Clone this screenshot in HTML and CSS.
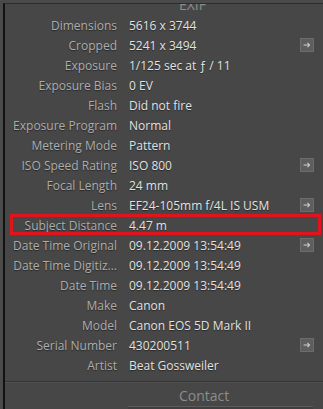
FILE: index.html
```html
<!DOCTYPE html>
<html lang="en">
<head>
  <meta charset="UTF-8" />
  <title>Metadata - EXIF</title>
  <link rel="stylesheet" href="styles.css">
</head>
<body>
  <div class="panel">
    <div class="section-head top"><span>EXIF</span></div>

    <div class="rows">
      <div class="row"><span class="label">Dimensions</span><span class="value">5616 x 3744</span></div>
      <div class="row"><span class="label">Cropped</span><span class="value">5241 x 3494</span><button class="go"><svg viewBox="0 0 14 14"><path d="M3 7h7M7.5 4.5 10 7 7.5 9.5"/></svg></button></div>
      <div class="row"><span class="label">Exposure</span><span class="value">1/125 sec at ƒ / 11</span></div>
      <div class="row"><span class="label">Exposure Bias</span><span class="value">0 EV</span></div>
      <div class="row"><span class="label">Flash</span><span class="value">Did not fire</span></div>
      <div class="row"><span class="label">Exposure Program</span><span class="value">Normal</span></div>
      <div class="row"><span class="label">Metering Mode</span><span class="value">Pattern</span></div>
      <div class="row"><span class="label">ISO Speed Rating</span><span class="value">ISO 800</span><button class="go"><svg viewBox="0 0 14 14"><path d="M3 7h7M7.5 4.5 10 7 7.5 9.5"/></svg></button></div>
      <div class="row"><span class="label">Focal Length</span><span class="value">24 mm</span></div>
      <div class="row"><span class="label">Lens</span><span class="value">EF24-105mm f/4L IS USM</span><button class="go"><svg viewBox="0 0 14 14"><path d="M3 7h7M7.5 4.5 10 7 7.5 9.5"/></svg></button></div>
      <div class="row marked"><span class="label">Subject Distance</span><span class="value">4.47 m</span></div>
      <div class="row"><span class="label">Date Time Original</span><span class="value">09.12.2009 13:54:49</span><button class="go"><svg viewBox="0 0 14 14"><path d="M3 7h7M7.5 4.5 10 7 7.5 9.5"/></svg></button></div>
      <div class="row"><span class="label">Date Time Digitiz...</span><span class="value">09.12.2009 13:54:49</span></div>
      <div class="row"><span class="label">Date Time</span><span class="value">09.12.2009 13:54:49</span></div>
      <div class="row"><span class="label">Make</span><span class="value">Canon</span></div>
      <div class="row"><span class="label">Model</span><span class="value">Canon EOS 5D Mark II</span></div>
      <div class="row"><span class="label">Serial Number</span><span class="value">430200511</span><button class="go"><svg viewBox="0 0 14 14"><path d="M3 7h7M7.5 4.5 10 7 7.5 9.5"/></svg></button></div>
      <div class="row"><span class="label">Artist</span><span class="value">Beat Gossweiler</span></div>
    </div>

    <div class="section-head contact"><span>Contact</span></div>
    <div class="field"></div>
  </div>
</body>
</html>
```

FILE: styles.css
```css
body {
  margin: 0;
  background: #4a4a4a;
  font-family: "Open Sans", "Noto Sans", sans-serif;
  font-size: 12px;
  overflow: hidden;
}

.panel {
  margin: 3px 0 0 3px;
  border-left: 2px solid #121212;
  border-top: 1px solid #2c2c2c;
  background: #474747;
  height: 420px;
}

/* Abschnittstitel */
.section-head {
  color: #8c8c8c;
  font-size: 14px;
  padding-left: 174px;
  overflow: hidden;
}
.section-head.top { height: 11px; line-height: 1px; }
.section-head.contact {
  margin-top: 6px;
  border-top: 1px solid #363636;
  box-shadow: inset 0 1px 0 #4f4f4f;
  height: 24px;
  line-height: 27px;
}

/* Zeilen */
.row {
  display: grid;
  grid-template-columns: 112px 1fr 14px;
  column-gap: 12px;
  align-items: center;
  height: 20px;
  padding-right: 9px;
  text-shadow: 0 1px 1px rgba(0, 0, 0, 0.45);
}
.label { text-align: right; color: #adadad; white-space: nowrap; }
.value { color: #e2e2e2; white-space: nowrap; }

.row.marked { position: relative; }
.row.marked::after {
  content: "";
  position: absolute;
  left: 5px;
  right: 2px;
  top: -1px;
  bottom: 0;
  border: 3px solid #e0141c;
}

/* Pfeil-Knopf */
.go {
  grid-column: 3;
  width: 14px;
  height: 14px;
  padding: 0;
  border: 1px solid #6c6c6c;
  background: #5e5e5e;
  display: block;
}
.go svg { display: block; width: 12px; height: 12px; }
.go path { fill: none; stroke: #d0d0d0; stroke-width: 1.2; }

.field {
  margin: 0 10px 0 123px;
  height: 20px;
  border-top: 1px solid #5c5c5c;
  background: #3f3f3f;
}
```
